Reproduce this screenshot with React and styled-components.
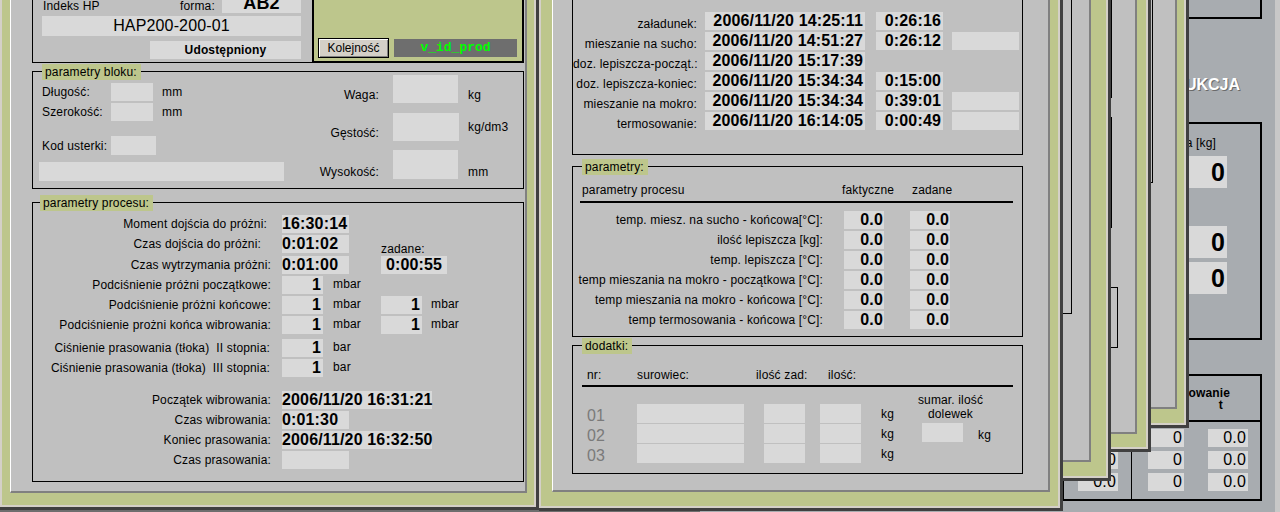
import styled, { createGlobalStyle } from "styled-components";

const OLIVE = "#bdc68c";
const FIELD = "#d9d9d9";

const GlobalStyle = createGlobalStyle`
  html, body { margin: 0; padding: 0; }
  body {
    background: #6e6e6e;
    font-family: "Liberation Sans", Arial, sans-serif;
    font-size: 12px;
    letter-spacing: 0.15px;
    color: #000;
  }
`;

const Desktop = styled.div`
  position: relative;
  width: 1280px;
  height: 512px;
  overflow: hidden;
  background: #6e6e6e;
`;

const WinShell = styled.div`
  position: absolute;
  left: ${(p) => p.$x}px;
  top: ${(p) => p.$y}px;
  width: ${(p) => p.$w}px;
  height: ${(p) => p.$h}px;
  z-index: ${(p) => p.$z};
  box-sizing: border-box;
  display: flex;
  border-right: 3px solid #404040;
  border-bottom: 3px solid #404040;
`;

const Frame = styled.div`
  flex: 1;
  min-width: 0;
  display: flex;
  box-sizing: border-box;
  background: ${OLIVE};
  border: 2px solid #d4d0c8;
  padding: 8px ${(p) => p.$pr}px ${(p) => p.$pb}px ${(p) => p.$pl}px;
`;

const Panel = styled.div`
  flex: 1;
  min-width: 0;
  display: flex;
  flex-direction: column;
  align-items: ${(p) => (p.$right ? "flex-end" : "flex-start")};
  box-sizing: border-box;
  overflow: hidden;
  background: #c0c0c0;
  border-left: 1px solid #fff;
  border-top: 1px solid #fff;
  border-right: 2px solid #808080;
  border-bottom: 2px solid #808080;
  padding-left: ${(p) => p.$pl || 0}px;
`;

function Window({ x, y = -60, w, h, z, pl, pr, pb, right, padLeft, children }) {
  return (
    <WinShell $x={x} $y={y} $w={w} $h={h} $z={z}>
      <Frame $pl={pl} $pr={pr} $pb={pb}>
        <Panel $right={right} $pl={padLeft}>
          {children}
        </Panel>
      </Frame>
    </WinShell>
  );
}

const GroupBox = styled.div`
  position: relative;
  flex: none;
  box-sizing: border-box;
  width: ${(p) => p.$w}px;
  height: ${(p) => p.$h}px;
  margin-top: ${(p) => p.$mt || 0}px;
  margin-left: ${(p) => p.$ml || 0}px;
  border: 1px solid #000;
  display: flex;
  flex-direction: ${(p) => (p.$row ? "row" : "column")};
`;

const Legend = styled.span`
  position: absolute;
  top: -8px;
  left: ${(p) => p.$left ?? 9}px;
  height: 16px;
  line-height: 16px;
  padding: 0 4px 0 3px;
  background: ${OLIVE};
  white-space: nowrap;
`;

const Field = styled.div`
  flex: none;
  box-sizing: border-box;
  width: ${(p) => p.$w}px;
  height: ${(p) => p.$h || 18}px;
  line-height: ${(p) => p.$h || 18}px;
  margin-left: ${(p) => p.$ml || 0}px;
  padding: 0 ${(p) => p.$pr || 0}px 0 ${(p) => p.$pl || 0}px;
  background: ${FIELD};
  text-align: ${(p) => p.$align || "left"};
  font-size: ${(p) => p.$size || 16}px;
  font-weight: ${(p) => (p.$regular ? 400 : 700)};
  white-space: nowrap;
`;

const Text = styled.span`
  flex: none;
  white-space: pre;
  line-height: 14px;
  margin-left: ${(p) => p.$ml || 0}px;
`;

/* ---------- window 1 ---------- */

const TopRow = styled.div`
  display: flex;
  margin-top: 19px;
  height: 93px;
`;

const InfoBox = styled.div`
  box-sizing: border-box;
  width: 281px;
  height: 93px;
  border: 1px solid #000;
  display: flex;
  flex-direction: column;
  justify-content: flex-end;
  padding-bottom: 3px;
`;

const FormaRow = styled.div`
  display: grid;
  grid-template-columns: 137px 42px 79px;
  align-items: end;
  padding-left: 10px;
  height: 19px;
`;

const OliveBox = styled.div`
  box-sizing: border-box;
  width: 212px;
  height: 93px;
  margin-left: -1px;
  border: 2px solid #000;
  background: ${OLIVE};
  display: flex;
  align-items: flex-end;
  gap: 5px;
  padding: 0 4px 3px 4px;
`;

const WinButton = styled.button`
  box-sizing: border-box;
  width: 71px;
  height: 20px;
  padding: 0;
  border: 1px solid #000;
  background: #d4d0c8;
  box-shadow: inset 1px 1px #fff, inset -1px -1px #808080;
  font-family: "Liberation Sans", Arial, sans-serif;
  font-size: 12px;
  color: #000;
`;

const CodeBadge = styled.div`
  width: 123px;
  height: 18px;
  margin-bottom: 1px;
  line-height: 18px;
  background: #6e6e6e;
  color: #00ff00;
  text-align: center;
  font-family: "Liberation Mono", "Courier New", monospace;
  font-weight: 700;
  font-size: 13px;
  letter-spacing: 0;
`;

const BlokLeft = styled.div`
  width: 266px;
  padding-top: 11px;
  display: flex;
  flex-direction: column;
`;

const BlokRow = styled.div`
  display: grid;
  grid-template-columns: 60px ${(p) => p.$fw}px auto;
  column-gap: 9px;
  align-items: center;
  padding-left: 9px;
  margin-top: ${(p) => p.$mt || 0}px;
  height: ${(p) => p.$h || 18}px;
`;

const BlokRight = styled.div`
  display: grid;
  grid-template-columns: 94px 75px auto;
  grid-auto-rows: 28px;
  row-gap: 10px;
  padding-top: 3px;
  align-items: end;
`;

const BlokLabel = styled.span`
  text-align: right;
  padding-right: 14px;
  line-height: 14px;
  padding-bottom: ${(p) => p.$pb ?? 1}px;
  white-space: nowrap;
`;

const BlokUnit = styled.span`
  line-height: 14px;
  padding-bottom: ${(p) => p.$pb ?? 1}px;
  white-space: nowrap;
`;

const ProcBody = styled.div`
  padding-top: 12px;
  display: flex;
  flex-direction: column;
`;

const ProcRow = styled.div`
  display: flex;
  align-items: center;
  height: 18px;
  margin-top: ${(p) => p.$mt ?? 2}px;
`;

const ProcLabel = styled.span`
  flex: none;
  box-sizing: border-box;
  width: 238px;
  margin-right: 11px;
  padding-right: ${(p) => p.$pr || 0}px;
  text-align: right;
  white-space: pre;
  line-height: 14px;
`;

const Unit = styled.span`
  flex: none;
  box-sizing: border-box;
  width: ${(p) => (p.$w ? `${p.$w}px` : "auto")};
  margin-left: ${(p) => p.$ml ?? 10}px;
  line-height: 14px;
  padding-bottom: 3px;
`;

const Zadane = styled.span`
  align-self: flex-end;
  margin-left: 32px;
  margin-bottom: -3px;
  line-height: 14px;
`;

/* ---------- window 2 ---------- */

const TimeBody = styled.div`
  padding-top: 31px;
  display: flex;
  flex-direction: column;
  gap: 2px;
`;

const TimeRow = styled.div`
  display: flex;
  align-items: center;
  height: 18px;
`;

const TimeLabel = styled.span`
  width: 124px;
  flex: none;
  text-align: right;
  align-self: flex-end;
  line-height: 14px;
  margin-bottom: -1px;
  white-space: nowrap;
`;

const HeadRow = styled.div`
  display: grid;
  grid-template-columns: ${(p) => p.$cols};
  margin-top: ${(p) => p.$mt}px;
  padding-left: ${(p) => p.$pl}px;
  line-height: 14px;
  height: 14px;
  white-space: nowrap;
`;

const Rule = styled.div`
  height: 2px;
  background: #000;
  width: ${(p) => p.$w}px;
  margin-left: ${(p) => p.$ml}px;
  margin-top: ${(p) => p.$mt}px;
`;

const ParamRows = styled.div`
  margin-top: 8px;
  display: flex;
  flex-direction: column;
  gap: 2px;
`;

const ParamRow = styled.div`
  display: flex;
  align-items: center;
  height: 18px;
`;

const ParamLabel = styled.span`
  width: 250px;
  flex: none;
  text-align: right;
  white-space: nowrap;
  line-height: 14px;
`;

const DodBody = styled.div`
  display: flex;
  margin-top: 6px;
`;

const DodRows = styled.div`
  padding-top: 11px;
  padding-left: 14px;
  display: flex;
  flex-direction: column;
  gap: 1px;
`;

const DodRow = styled.div`
  display: flex;
  align-items: center;
  height: 19px;
`;

const Nr = styled.span`
  width: 50px;
  flex: none;
  color: #7a7a7a;
  font-size: 16px;
  line-height: 19px;
  padding-top: 4px;
`;

const SumBlock = styled.div`
  width: 87px;
  margin-left: 13px;
  display: flex;
  flex-direction: column;
  align-items: center;
  line-height: 14px;
`;

const SumRow = styled.div`
  align-self: stretch;
  display: flex;
  align-items: center;
  margin-top: 2px;
  padding-left: 15px;
`;

/* ---------- stacked windows ---------- */

const EdgeBox = styled.div`
  flex: none;
  box-sizing: border-box;
  width: ${(p) => p.$w}px;
  height: ${(p) => p.$h}px;
  margin-top: ${(p) => p.$mt || 0}px;
  margin-right: ${(p) => p.$mr}px;
  border: 1px solid #000;
`;

/* ---------- back window ---------- */

const BackWin = styled.div`
  position: absolute;
  left: 700px;
  top: -60px;
  width: 580px;
  height: 572px;
  z-index: 1;
  box-sizing: border-box;
  background: #a8acb0;
  border-right: 5px solid #c8c8c8;
  padding-right: 13px;
  display: flex;
  flex-direction: column;
  align-items: flex-end;
`;

const BlackBox = styled.div`
  flex: none;
  box-sizing: border-box;
  width: ${(p) => p.$w}px;
  height: ${(p) => p.$h}px;
  margin-top: ${(p) => p.$mt || 0}px;
  border: 2px solid #000;
`;

const BackTitle = styled.div`
  align-self: stretch;
  margin-top: 56px;
  padding-right: 22px;
  text-align: right;
  line-height: 20px;
  font-size: 16px;
  font-weight: 700;
  letter-spacing: 0;
  color: #fff;
  text-shadow: 1px 1px 0 #6a6a6a;
`;

const WeightCol = styled.div`
  display: flex;
  flex-direction: column;
  align-items: flex-end;
  padding-right: 33px;
`;

const BigField = styled.div`
  width: 90px;
  height: 32px;
  line-height: 33px;
  margin-top: ${(p) => p.$mt}px;
  background: ${FIELD};
  text-align: right;
  padding-right: 2px;
  box-sizing: border-box;
  font-size: 25px;
  font-weight: 700;
`;

const TableHead = styled.div`
  height: 46px;
  box-sizing: border-box;
  border-bottom: 2px solid #000;
  display: flex;
  flex-direction: column;
  align-items: flex-end;
  padding-top: 11px;
  font-weight: 700;
  line-height: 12px;
`;

const HeadLine = styled.span`
  padding-right: ${(p) => p.$pr}px;
`;

const TableBody = styled.div`
  display: flex;
  height: 77px;
`;

const TableCol = styled.div`
  box-sizing: border-box;
  width: ${(p) => (p.$w ? `${p.$w}px` : "auto")};
  flex: ${(p) => (p.$w ? "none" : 1)};
  border-right: ${(p) => (p.$divider ? "1px solid #000" : "none")};
  padding-top: 7px;
  padding-left: ${(p) => p.$pl}px;
  display: grid;
  grid-template-columns: ${(p) => p.$cols};
  column-gap: 24px;
  row-gap: 4px;
  align-content: start;
`;

export default function App() {
  return (
    <Desktop>
      <GlobalStyle />

      {/* left window */}
      <Window x={0} w={539} h={570} z={6} pl={8} pr={7} pb={12} padLeft={21}>
        <TopRow>
          <InfoBox>
            <FormaRow>
              <Text>Indeks HP</Text>
              <Text>forma:</Text>
              <Field $w={79} $h={19} $size={18} $align="center">
                AB2
              </Field>
            </FormaRow>
            <Field $w={259} $h={20} $ml={9} $size={16} $regular $align="center" style={{ marginTop: 3 }}>
              HAP200-200-01
            </Field>
            <Field $w={151} $ml={117} $size={12} $align="center" style={{ marginTop: 5 }}>
              Udostępniony
            </Field>
          </InfoBox>
          <OliveBox>
            <WinButton>Kolejność</WinButton>
            <CodeBadge>v_id_prod</CodeBadge>
          </OliveBox>
        </TopRow>

        <GroupBox $w={492} $h={118} $mt={8} $row>
          <Legend>parametry bloku:</Legend>
          <BlokLeft>
            <BlokRow $fw={42}>
              <Text>Długość:</Text>
              <Field $w={42} />
              <Text>mm</Text>
            </BlokRow>
            <BlokRow $fw={42} $mt={2}>
              <Text>Szerokość:</Text>
              <Field $w={42} />
              <Text>mm</Text>
            </BlokRow>
            <BlokRow $fw={45} $mt={15} $h={19}>
              <Text>Kod usterki:</Text>
              <Field $w={45} $h={19} />
            </BlokRow>
            <Field $w={245} $h={19} $ml={6} style={{ marginTop: 7 }} />
          </BlokLeft>
          <BlokRight>
            <BlokLabel>Waga:</BlokLabel>
            <Field $w={65} $h={28} />
            <BlokUnit>kg</BlokUnit>
            <BlokLabel>Gęstość:</BlokLabel>
            <Field $w={66} $h={28} />
            <BlokUnit $pb={7}>kg/dm3</BlokUnit>
            <BlokLabel $pb={0}>Wysokość:</BlokLabel>
            <Field $w={65} $h={29} />
            <BlokUnit $pb={0}>mm</BlokUnit>
          </BlokRight>
        </GroupBox>

        <GroupBox $w={492} $h={280} $mt={13}>
          <Legend $left={7}>parametry procesu:</Legend>
          <ProcBody>
            <ProcRow $mt={0}>
              <ProcLabel $pr={4}>Moment dojścia do próżni:</ProcLabel>
              <Field $w={67}>16:30:14</Field>
            </ProcRow>
            <ProcRow>
              <ProcLabel $pr={10}>Czas dojścia do próżni:</ProcLabel>
              <Field $w={67}>0:01:02</Field>
              <Zadane>zadane:</Zadane>
            </ProcRow>
            <ProcRow $mt={3}>
              <ProcLabel>Czas wytrzymania próżni:</ProcLabel>
              <Field $w={67}>0:01:00</Field>
              <Field $w={66} $ml={32} $align="center">0:00:55</Field>
            </ProcRow>
            <ProcRow>
              <ProcLabel>Podciśnienie próżni początkowe:</ProcLabel>
              <Field $w={41} $align="right" $pr={2}>1</Field>
              <Unit>mbar</Unit>
            </ProcRow>
            <ProcRow>
              <ProcLabel>Podciśnienie próżni końcowe:</ProcLabel>
              <Field $w={41} $align="right" $pr={2}>1</Field>
              <Unit $w={48}>mbar</Unit>
              <Field $w={41} $align="right" $pr={2}>1</Field>
              <Unit $ml={9}>mbar</Unit>
            </ProcRow>
            <ProcRow>
              <ProcLabel>Podciśnienie prożni końca wibrowania:</ProcLabel>
              <Field $w={41} $align="right" $pr={2}>1</Field>
              <Unit $w={48}>mbar</Unit>
              <Field $w={41} $align="right" $pr={2}>1</Field>
              <Unit $ml={9}>mbar</Unit>
            </ProcRow>
            <ProcRow $mt={5}>
              <ProcLabel $pr={1}>Ciśnienie prasowania (tłoka)  II stopnia:</ProcLabel>
              <Field $w={41} $align="right" $pr={2}>1</Field>
              <Unit>bar</Unit>
            </ProcRow>
            <ProcRow>
              <ProcLabel $pr={1}>Ciśnienie prasowania (tłoka)  III stopnia:</ProcLabel>
              <Field $w={41} $align="right" $pr={2}>1</Field>
              <Unit>bar</Unit>
            </ProcRow>
            <ProcRow $mt={14}>
              <ProcLabel>Początek wibrowania:</ProcLabel>
              <Field $w={150}>2006/11/20 16:31:21</Field>
            </ProcRow>
            <ProcRow>
              <ProcLabel>Czas wibrowania:</ProcLabel>
              <Field $w={67}>0:01:30</Field>
            </ProcRow>
            <ProcRow>
              <ProcLabel>Koniec prasowania:</ProcLabel>
              <Field $w={150}>2006/11/20 16:32:50</Field>
            </ProcRow>
            <ProcRow>
              <ProcLabel>Czas prasowania:</ProcLabel>
              <Field $w={67} />
            </ProcRow>
          </ProcBody>
        </GroupBox>
      </Window>

      {/* middle window */}
      <Window x={539} w={524} h={571} z={5} pl={11} pr={8} pb={14} padLeft={19}>
        <GroupBox $w={451} $h={175} $mt={29}>
          <TimeBody>
            <TimeRow>
              <TimeLabel>załadunek:</TimeLabel>
              <Field $w={160} $ml={8} $align="right" $pr={2}>2006/11/20 14:25:11</Field>
              <Field $w={67} $ml={11} $align="right" $pr={2}>0:26:16</Field>
            </TimeRow>
            <TimeRow>
              <TimeLabel>mieszanie na sucho:</TimeLabel>
              <Field $w={160} $ml={8} $align="right" $pr={2}>2006/11/20 14:51:27</Field>
              <Field $w={67} $ml={11} $align="right" $pr={2}>0:26:12</Field>
              <Field $w={67} $ml={9} />
            </TimeRow>
            <TimeRow>
              <TimeLabel>doz. lepiszcza-począt.:</TimeLabel>
              <Field $w={160} $ml={8} $align="right" $pr={2}>2006/11/20 15:17:39</Field>
            </TimeRow>
            <TimeRow>
              <TimeLabel>doz. lepiszcza-koniec:</TimeLabel>
              <Field $w={160} $ml={8} $align="right" $pr={2}>2006/11/20 15:34:34</Field>
              <Field $w={67} $ml={11} $align="right" $pr={2}>0:15:00</Field>
            </TimeRow>
            <TimeRow>
              <TimeLabel>mieszanie na mokro:</TimeLabel>
              <Field $w={160} $ml={8} $align="right" $pr={2}>2006/11/20 15:34:34</Field>
              <Field $w={67} $ml={11} $align="right" $pr={2}>0:39:01</Field>
              <Field $w={67} $ml={9} />
            </TimeRow>
            <TimeRow>
              <TimeLabel>termosowanie:</TimeLabel>
              <Field $w={160} $ml={8} $align="right" $pr={2}>2006/11/20 16:14:05</Field>
              <Field $w={67} $ml={11} $align="right" $pr={2}>0:00:49</Field>
              <Field $w={67} $ml={9} />
            </TimeRow>
          </TimeBody>
        </GroupBox>

        <GroupBox $w={451} $h={171} $mt={11}>
          <Legend>parametry:</Legend>
          <HeadRow $cols="260px 70px auto" $mt={16} $pl={9}>
            <span>parametry procesu</span>
            <span>faktyczne</span>
            <span>zadane</span>
          </HeadRow>
          <Rule $w={433} $ml={7} $mt={4} />
          <ParamRows>
            {[
              "temp. miesz. na sucho - końcowa[°C]:",
              "ilość lepiszcza [kg]:",
              "temp. lepiszcza [°C]:",
              "temp mieszania na mokro - początkowa [°C]:",
              "temp mieszania na mokro - końcowa [°C]:",
              "temp termosowania - końcowa [°C]:",
            ].map((label) => (
              <ParamRow key={label}>
                <ParamLabel>{label}</ParamLabel>
                <Field $w={40} $ml={21} $align="right" $pr={1}>0.0</Field>
                <Field $w={40} $ml={26} $align="right" $pr={1}>0.0</Field>
              </ParamRow>
            ))}
          </ParamRows>
        </GroupBox>

        <GroupBox $w={451} $h={129} $mt={8}>
          <Legend>dodatki:</Legend>
          <HeadRow $cols="50px 119px 72px auto" $mt={22} $pl={14}>
            <span>nr:</span>
            <span>surowiec:</span>
            <span>ilość zad:</span>
            <span>ilość:</span>
          </HeadRow>
          <Rule $w={431} $ml={9} $mt={3} />
          <DodBody>
            <DodRows>
              {["01", "02", "03"].map((nr) => (
                <DodRow key={nr}>
                  <Nr>{nr}</Nr>
                  <Field $w={107} $h={19} />
                  <Field $w={41} $h={19} $ml={20} />
                  <Field $w={41} $h={19} $ml={15} />
                  <Text $ml={20}>kg</Text>
                </DodRow>
              ))}
            </DodRows>
            <SumBlock>
              <span>sumar. ilość</span>
              <span>dolewek</span>
              <SumRow>
                <Field $w={41} $h={19} />
                <Text $ml={15} style={{ paddingTop: 5 }}>kg</Text>
              </SumRow>
            </SumBlock>
          </DodBody>
        </GroupBox>
      </Window>

      {/* cascaded windows behind */}
      <Window x={600} w={511} h={541} z={4} pl={11} pr={15} pb={14} right>
        <EdgeBox $w={220} $h={363} $mr={17} />
      </Window>
      <Window x={640} w={511} h={512} z={3} pl={11} pr={9} pb={13} right>
        <EdgeBox $w={220} $h={147} $mr={23} />
        <EdgeBox $w={220} $h={111} $mt={19} $mr={23} />
        <EdgeBox $w={220} $h={61} $mt={59} $mr={17} />
      </Window>
      <Window x={680} w={509} h={488} z={2} pl={11} pr={7} pb={14} right>
        <EdgeBox $w={220} $h={232} $mr={22} />
      </Window>

      {/* back window */}
      <BackWin>
        <BlackBox $w={300} $h={79} />
        <BackTitle>PRODUKCJA</BackTitle>
        <BlackBox $w={300} $h={218} $mt={27}>
          <WeightCol>
            <Text style={{ marginTop: 12, marginRight: 11 }}>Waga [kg]</Text>
            <BigField $mt={6}>0</BigField>
            <BigField $mt={38}>0</BigField>
            <BigField $mt={4}>0</BigField>
          </WeightCol>
        </BlackBox>
        <BlackBox $w={200} $h={127} $mt={34}>
          <TableHead>
            <HeadLine $pr={30}>Prasowanie</HeadLine>
            <HeadLine $pr={37}>t</HeadLine>
          </TableHead>
          <TableBody>
            <TableCol $w={68} $divider $pl={14} $cols="40px">
              {[1, 2, 3].map((i) => (
                <Field key={i} $w={40} $size={16} $regular $align="right" $pr={2}>
                  0.0
                </Field>
              ))}
            </TableCol>
            <TableCol $pl={16} $cols="36px 40px">
              {[1, 2, 3].map((i) => [
                <Field key={`a${i}`} $w={36} $size={16} $regular $align="right" $pr={2}>
                  0
                </Field>,
                <Field key={`b${i}`} $w={40} $size={16} $regular $align="right" $pr={2}>
                  0.0
                </Field>,
              ])}
            </TableCol>
          </TableBody>
        </BlackBox>
      </BackWin>
    </Desktop>
  );
}
